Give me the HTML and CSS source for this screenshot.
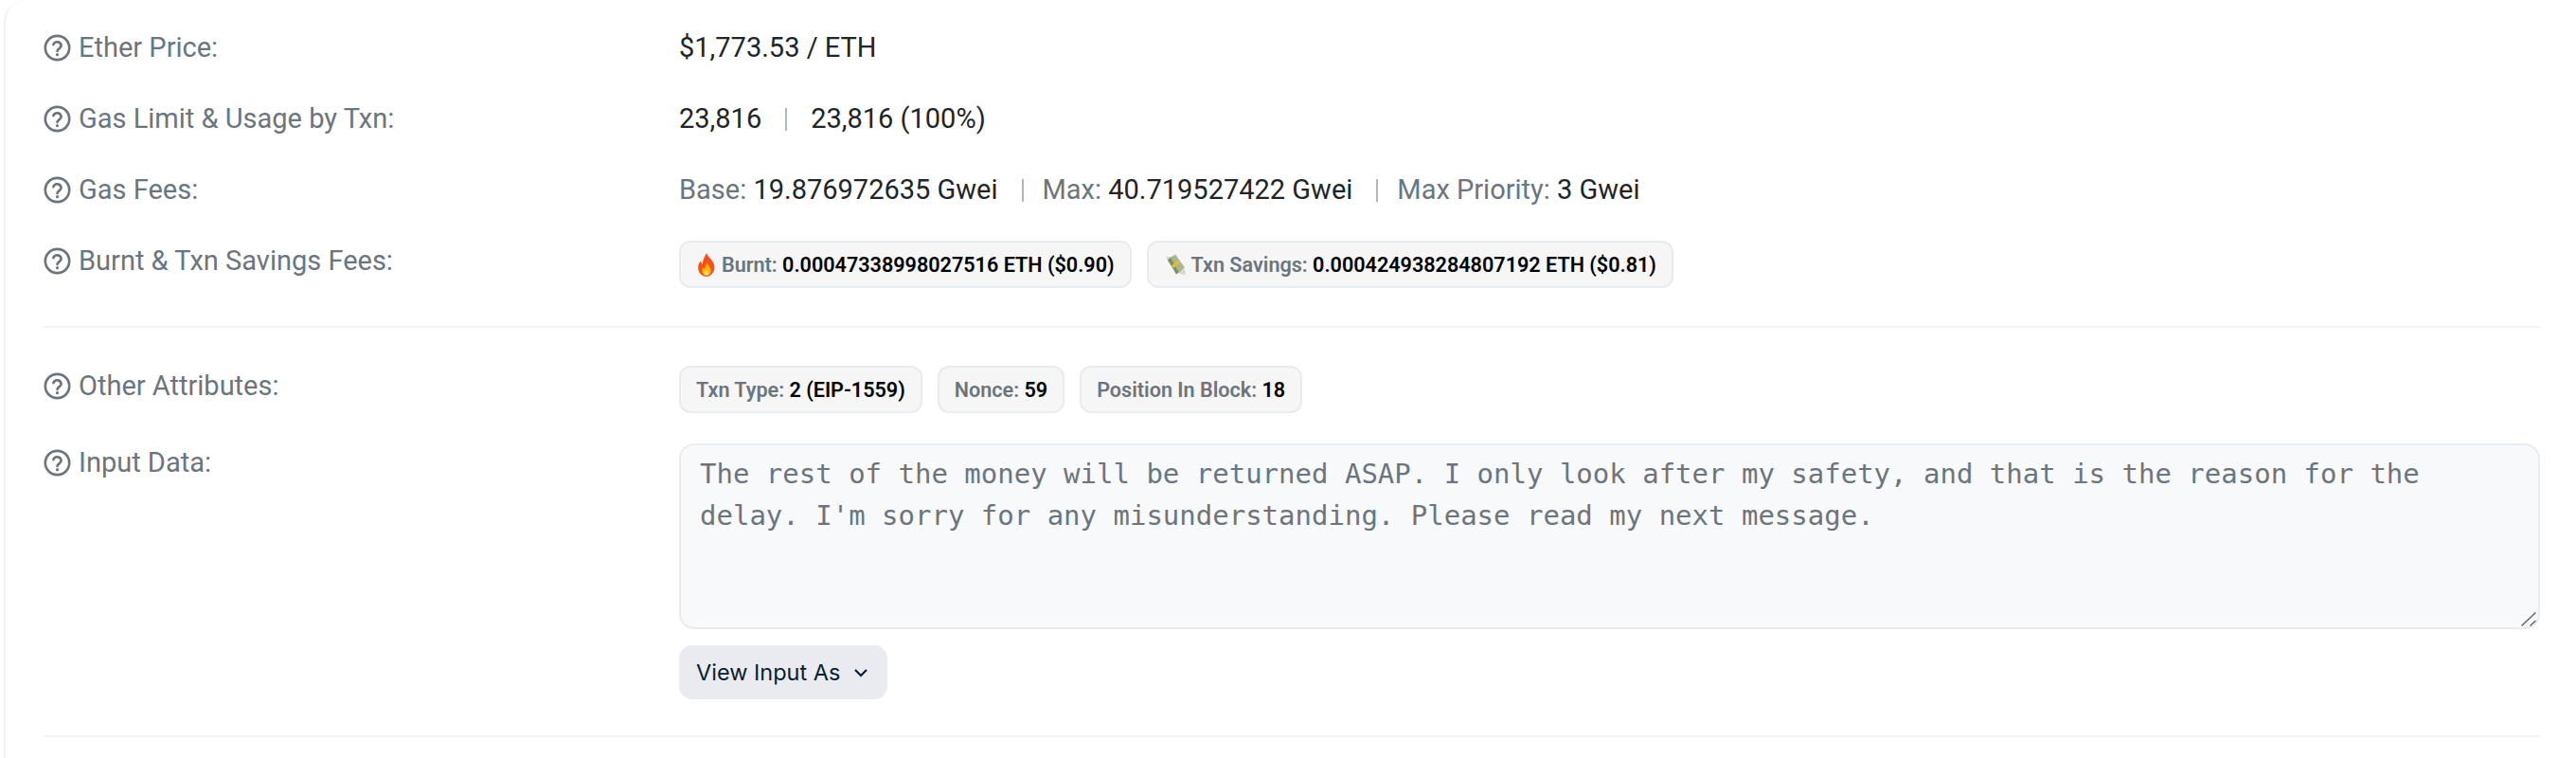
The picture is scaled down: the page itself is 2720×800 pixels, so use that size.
FILE: index.html
```html
<!DOCTYPE html>
<html lang="en">
<head>
  <meta charset="UTF-8" />
  <title>Transaction Details</title>
  <link rel="stylesheet" href="styles.css">
</head>
<body>

  <div class="card">
    <div class="row">
      <div class="label"><svg class="help" viewBox="0 0 24 24"><circle cx="12" cy="12" r="10.5"/><path d="M8.6 9.2a3.5 3.5 0 0 1 6.8 1c0 2.3-3.4 2.6-3.4 4.6"/><circle class="dot" cx="12" cy="17.9" r="1.3"/></svg>Ether Price:</div>
      <div class="value">$1,773.53 / ETH</div>
    </div>
    <div class="row">
      <div class="label"><svg class="help" viewBox="0 0 24 24"><circle cx="12" cy="12" r="10.5"/><path d="M8.6 9.2a3.5 3.5 0 0 1 6.8 1c0 2.3-3.4 2.6-3.4 4.6"/><circle class="dot" cx="12" cy="17.9" r="1.3"/></svg>Gas Limit &amp; Usage by Txn:</div>
      <div class="value">23,816<span class="sep wide"></span>23,816 (100%)</div>
    </div>
    <div class="row">
      <div class="label"><svg class="help" viewBox="0 0 24 24"><circle cx="12" cy="12" r="10.5"/><path d="M8.6 9.2a3.5 3.5 0 0 1 6.8 1c0 2.3-3.4 2.6-3.4 4.6"/><circle class="dot" cx="12" cy="17.9" r="1.3"/></svg>Gas Fees:</div>
      <div class="value"><span class="muted">Base:</span> 19.876972635 Gwei<span class="sep"></span><span class="muted">Max:</span> 40.719527422 Gwei<span class="sep"></span><span class="muted">Max Priority:</span> 3 Gwei</div>
    </div>
    <div class="row">
      <div class="label"><svg class="help" viewBox="0 0 24 24"><circle cx="12" cy="12" r="10.5"/><path d="M8.6 9.2a3.5 3.5 0 0 1 6.8 1c0 2.3-3.4 2.6-3.4 4.6"/><circle class="dot" cx="12" cy="17.9" r="1.3"/></svg>Burnt &amp; Txn Savings Fees:</div>
      <div class="pills">
        <span class="pill">
          <svg class="emoji" viewBox="0 0 20 24"><path fill="#f4511e" d="M10 0c1 4 7 7 8 13 .8 6-3.400 11-8 11s-9-4-8.500-10c.3-3 2-5 3-6 0 2 .7 3 1.500 3.500C6 7 8 4 10 0z"/><path fill="#ffb300" d="M10.500 10c.5 2.500 4 4 4 8 0 3-2.200 5-4.500 5s-4.500-2-4.500-4.800c0-2 1-3.200 1.800-3.900.2 1 .6 1.500 1.200 1.700-.2-2 .8-4.300 2-6z"/><path fill="#ffe082" d="M10 17c.4 1 2 1.700 2 3.400 0 1.300-1 2.100-2 2.100s-2-.8-2-2.100c0-1.400 1.500-2 2-3.400z"/></svg>
          <span><span class="muted">Burnt:</span> 0.00047338998027516 ETH ($0.90)</span>
        </span>
        <span class="pill">
          <svg class="emoji wide" viewBox="0 0 24 24"><path fill="#d8d8cc" d="M2 3l7 1 2 5-6 1zM14 16l8 1 1 6-7-2z"/><path fill="#a9b88c" d="M7 4l5-3 10 14-6 5z"/><path fill="#7f9060" d="M7 4l9 16-3 2L4 7z"/><path fill="#e8b93c" d="M8 13l7-6 2 2.500-7 6z"/></svg>
          <span><span class="muted">Txn Savings:</span> 0.000424938284807192 ETH ($0.81)</span>
        </span>
      </div>
    </div>

    <hr class="divider first">

    <div class="row tight">
      <div class="label"><svg class="help" viewBox="0 0 24 24"><circle cx="12" cy="12" r="10.5"/><path d="M8.6 9.2a3.5 3.5 0 0 1 6.8 1c0 2.3-3.4 2.6-3.4 4.6"/><circle class="dot" cx="12" cy="17.9" r="1.3"/></svg>Other Attributes:</div>
      <div class="pills">
        <span class="pill"><span><span class="muted">Txn Type:</span> 2 (EIP-1559)</span></span>
        <span class="pill"><span><span class="muted">Nonce:</span> 59</span></span>
        <span class="pill"><span><span class="muted">Position In Block:</span> 18</span></span>
      </div>
    </div>
    <div class="row">
      <div class="label"><svg class="help" viewBox="0 0 24 24"><circle cx="12" cy="12" r="10.5"/><path d="M8.6 9.2a3.5 3.5 0 0 1 6.8 1c0 2.3-3.4 2.6-3.4 4.6"/><circle class="dot" cx="12" cy="17.9" r="1.3"/></svg>Input Data:</div>
      <div class="input-col">
        <div class="input-wrap">
          <textarea class="input-data" readonly>The rest of the money will be returned ASAP. I only look after my safety, and that is the reason for the delay. I'm sorry for any misunderstanding. Please read my next message.</textarea>
          <svg class="grip" viewBox="0 0 16 15"><path d="M.5 14.500L15.500.5M9.500 14.500l6-5.500"/></svg>
        </div>
        <button class="view-btn">View Input As<svg class="chevron" viewBox="0 0 16 10"><path d="M2 2l6 6 6-6"/></svg></button>
      </div>
    </div>

    <hr class="divider">
  </div>

</body>
</html>
```

FILE: styles.css
```css
body {
  font-family: Roboto, "Liberation Sans", sans-serif;
  background: #fff;
  margin: 0;
  overflow: hidden;
}

.card {
  margin-left: 4px;
  width: 2760px;
  height: 830px;
  box-sizing: border-box;
  padding: 29px 0 0 40px;
  border-left: 2px solid #f1f2f4;
  border-top-left-radius: 24px;
}

.row {
  display: grid;
  grid-template-columns: 671px 1965px;
  margin-bottom: 33px;
}

.row.tight {
  margin-bottom: 31px;
}

.label {
  display: flex;
  align-items: center;
  height: 42px;
  font-size: 29px;
  color: #6c757e;
}

.help {
  width: 29px;
  height: 29px;
  margin-right: 8px;
  fill: none;
  stroke: #6c757e;
  stroke-width: 2.200;
  stroke-linecap: round;
}

.help .dot {
  fill: #6c757e;
  stroke: none;
}

.value {
  font-size: 29px;
  line-height: 42px;
  color: #212529;
}

.muted {
  color: #6c757e;
}

.sep {
  display: inline-block;
  width: 2px;
  height: 24px;
  margin: 0 20px 0 25px;
  background: #adb5bd;
  vertical-align: -3px;
}

.sep.wide {
  margin: 0 25px;
}

.pills {
  display: flex;
  gap: 16px;
}

.pill {
  display: flex;
  align-items: center;
  gap: 5px;
  height: 50px;
  padding: 0 16px;
  box-sizing: border-box;
  background: #f6f6f6;
  border: 2px solid #e9ecef;
  border-radius: 12px;
  font-size: 21.600px;
  font-weight: 600;
  color: #000;
  white-space: nowrap;
}

.emoji {
  width: 22px;
  height: 25px;
}

.emoji.wide {
  width: 24px;
}

.input-col {
  display: flex;
  flex-direction: column;
  align-items: flex-start;
}

.input-wrap {
  position: relative;
  width: 100%;
}

.input-data {
  display: block;
  width: 100%;
  height: 196px;
  box-sizing: border-box;
  margin-top: 1px;
  padding: 8px 20px;
  background: #f8f9fa;
  border: 2px solid #e9ecef;
  border-radius: 16px;
  font-family: "DejaVu Sans Mono", monospace;
  font-size: 29px;
  line-height: 44px;
  color: #6c757e;
  outline: none;
  resize: none;
}

.grip {
  position: absolute;
  right: 4px;
  bottom: 3px;
  width: 16px;
  height: 15px;
  fill: none;
  stroke: #666;
  stroke-width: 1.500;
}

.view-btn {
  display: flex;
  align-items: center;
  gap: 14px;
  height: 57px;
  margin-top: 17px;
  padding: 0 20px 0 18px;
  background: #e9ebf0;
  border: none;
  border-radius: 14px;
  font-family: Inter, sans-serif;
  font-size: 23.500px;
  color: #081d35;
}

.chevron {
  width: 16px;
  height: 10px;
  fill: none;
  stroke: #081d35;
  stroke-width: 2.200;
}

.divider {
  width: 2636px;
  margin: 38px 0 0;
  border: none;
  border-top: 2px solid #f1f2f4;
}

.divider.first {
  margin: 40px 0 40px;
}
```
